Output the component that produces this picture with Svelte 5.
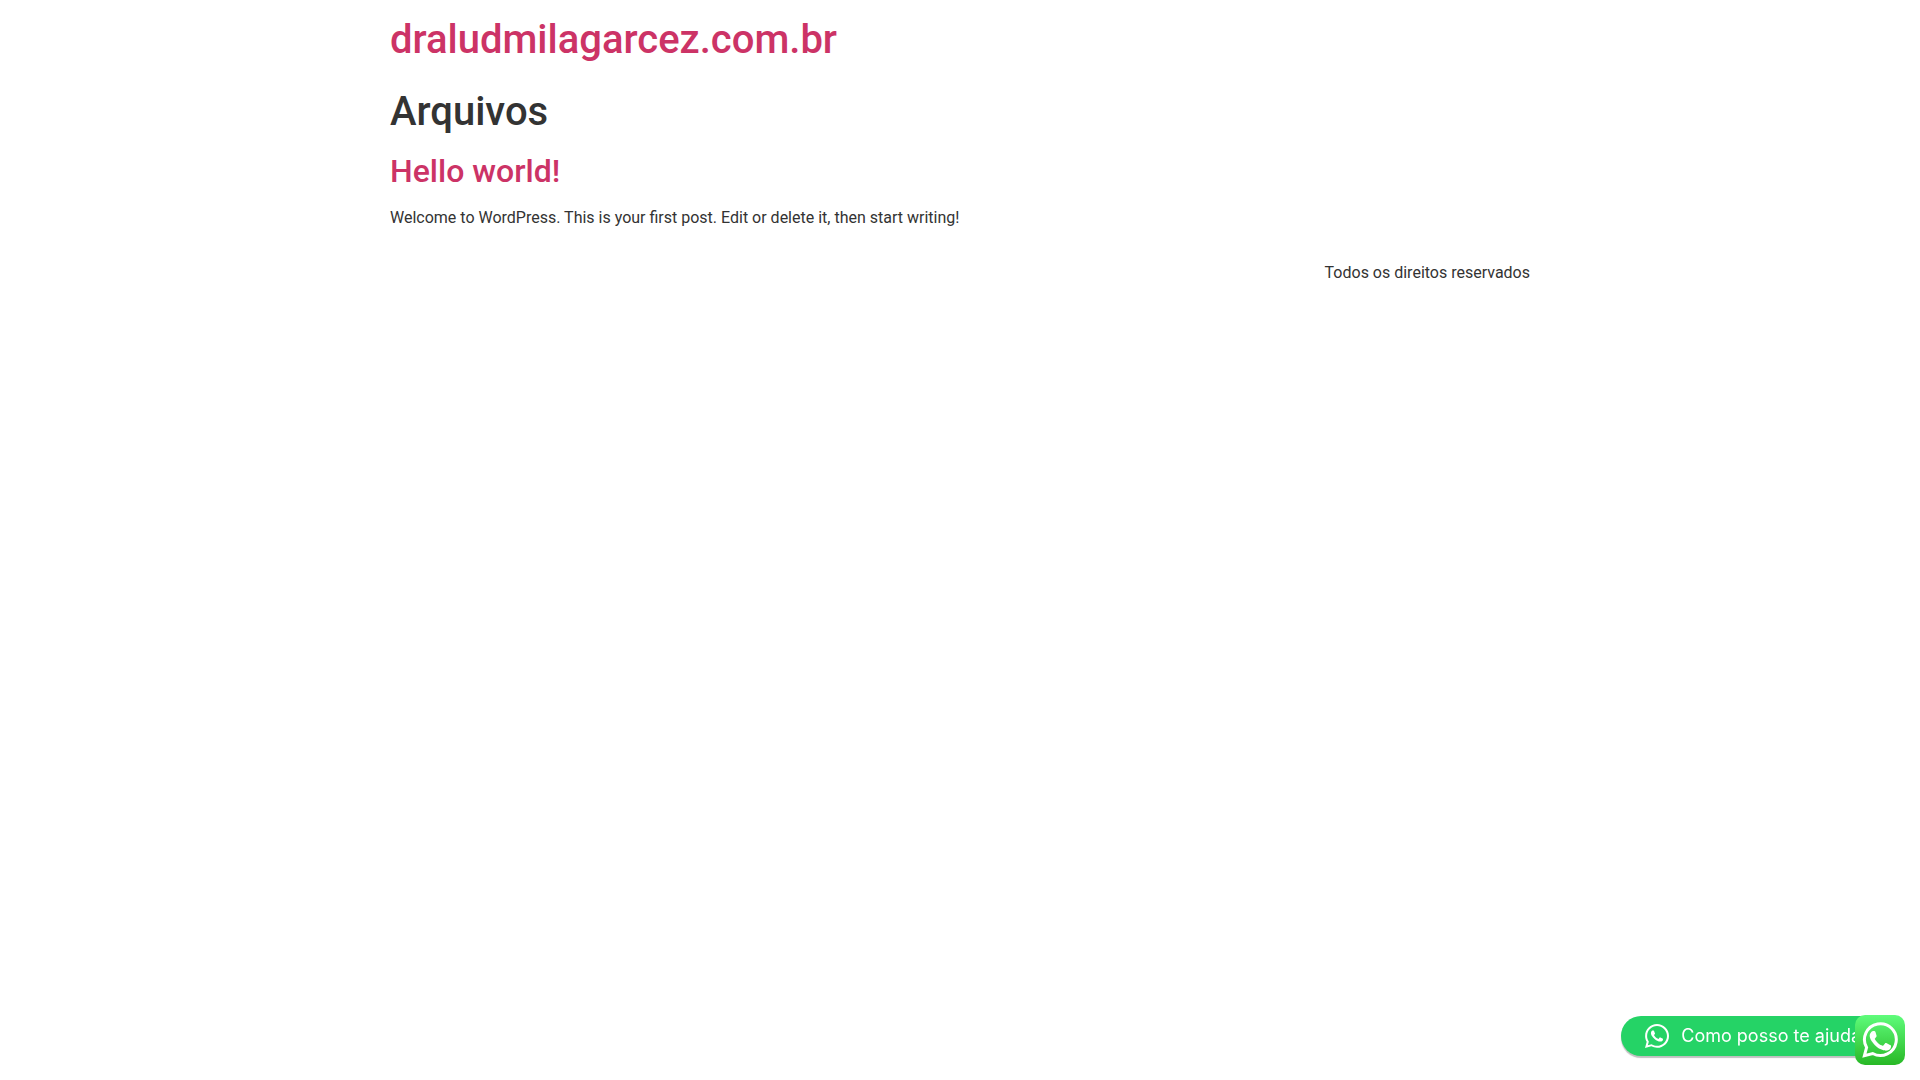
<script lang="ts">
	const siteName = 'draludmilagarcez.com.br';

	const posts = [
		{
			title: 'Hello world!',
			excerpt: 'Welcome to WordPress. This is your first post. Edit or delete it, then start writing!'
		}
	];
</script>

{#snippet whatsapp()}
	<svg viewBox="0 32 448 448" aria-hidden="true">
		<path
			fill="currentColor"
			d="M380.9 97.1C339 55.1 283.2 32 223.9 32c-122.4 0-222 99.6-222 222 0 39.1 10.2 77.3 29.6 111L0 480l117.7-30.9c32.4 17.7 68.9 27 106.1 27h.1c122.3 0 224.1-99.6 224.1-222 0-59.3-25.2-115-67.1-157zm-157 341.6c-33.2 0-65.7-8.9-94-25.7l-6.7-4-69.8 18.3L72 359.2l-4.4-7c-18.5-29.4-28.2-63.3-28.2-98.2 0-101.7 82.8-184.5 184.6-184.5 49.3 0 95.6 19.2 130.4 54.1 34.8 34.9 56.2 81.2 56.1 130.5 0 101.8-84.9 184.6-186.6 184.6zm101.2-138.2c-5.5-2.8-32.8-16.2-37.9-18-5.1-1.9-8.8-2.8-12.5 2.8-3.7 5.6-14.3 18-17.6 21.8-3.2 3.7-6.5 4.2-12 1.4-32.6-16.3-54-29.1-75.5-66-5.7-9.8 5.7-9.1 16.3-30.3 1.8-3.7.9-6.9-.5-9.7-1.4-2.8-12.5-30.1-17.1-41.2-4.5-10.8-9.1-9.3-12.5-9.5-3.2-.2-6.9-.2-10.6-.2-3.7 0-9.7 1.4-14.8 6.9-5.1 5.6-19.4 19-19.4 46.3 0 27.3 19.9 53.7 22.6 57.4 2.8 3.7 39.1 59.7 94.8 83.8 35.2 15.2 49 16.5 66.6 13.9 10.7-1.6 32.8-13.4 37.4-26.4 4.6-13 4.6-24.1 3.2-26.4-1.3-2.5-5-3.9-10.5-6.6z"
		/>
	</svg>
{/snippet}

{#snippet whatsappBold()}
	<svg viewBox="0 0 36 36" aria-hidden="true">
		<path
			fill="none"
			stroke="currentColor"
			stroke-width="3"
			d="M2.4 33.6l2.2-8.1A15.9 15.9 0 1 1 10.7 31.5z"
		/>
		<path
			fill="currentColor"
			d="M13.4 9.8c-.4-.8-.8-.9-1.3-.9h-1c-.5 0-1.1.2-1.6.8-.6.7-1.8 1.9-1.8 4.3s1.9 5 2.2 5.4c.3.4 3.7 5.8 9 7.9 4.4 1.8 5.3 1.4 6.3 1.3 1-.1 3.1-1.2 3.5-2.5.4-1.2.4-2.3.3-2.5-.2-.3-.5-.4-1-.7l-3.7-1.8c-.5-.2-.9-.3-1.3.3l-1.7 2.1c-.3.4-.6.4-1.1.1-.6-.2-2.3-.8-4.3-2.6-1.6-1.4-2.7-3.2-3-3.7-.3-.6 0-.8.3-1.1l1.3-1.6c.2-.4.2-.7 0-1.1z"
		/>
	</svg>
{/snippet}

<header class="site-header">
	<h1><a href="/">{siteName}</a></h1>
</header>

<main class="site-main">
	<h1>Arquivos</h1>
	{#each posts as post}
		<article>
			<h2><a href="/hello-world">{post.title}</a></h2>
			<p>{post.excerpt}</p>
		</article>
	{/each}
</main>

<footer class="site-footer">
	<p>Todos os direitos reservados</p>
</footer>

<a class="chat-pill" href="#chat">
	{@render whatsapp()}
	<span>Como posso te ajudar?</span>
</a>

<a class="chat-tile" href="#whatsapp" aria-label="WhatsApp">
	{@render whatsappBold()}
</a>

<style>
	:global(body) {
		background: #fff;
		color: #333;
		font-family: Roboto, sans-serif;
		font-size: 16px;
		line-height: 24px;
	}

	a {
		color: #c36;
		text-decoration: none;
	}

	h1, h2 {
		margin: 0 0 16px;
		font-weight: 500;
		line-height: 1.2;
	}

	h1 {
		font-size: 40px;
	}

	h2 {
		font-size: 32px;
	}

	p {
		margin: 0;
	}

	.site-header,
	.site-main,
	.site-footer {
		max-width: 1140px;
		margin: 0 auto;
	}

	.site-header {
		padding: 16px 0;
	}

	.site-header h1 {
		margin: 0;
	}

	.site-main {
		padding-top: 8px;
	}

	.site-footer {
		display: flex;
		justify-content: flex-end;
		padding: 31px 0 16px;
	}

	.chat-pill {
		position: fixed;
		right: 19px;
		bottom: 24px;
		display: flex;
		align-items: center;
		gap: 12px;
		box-sizing: border-box;
		height: 40px;
		padding: 0 24px;
		border-radius: 20px;
		background: #25d366;
		box-shadow: 0 2px 1px rgba(0, 0, 0, 0.25);
		color: #fff;
		font-family: Inter, sans-serif;
		font-size: 18px;
		white-space: nowrap;
	}

	.chat-pill svg {
		width: 24px;
		height: 24px;
	}

	.chat-tile {
		position: fixed;
		right: 15px;
		bottom: 15px;
		display: flex;
		align-items: center;
		justify-content: center;
		width: 50px;
		height: 50px;
		border-radius: 10px;
		background: linear-gradient(#5ffc7b, #28b826);
		color: #fff;
	}

	.chat-tile svg {
		width: 36px;
		height: 36px;
	}
</style>
